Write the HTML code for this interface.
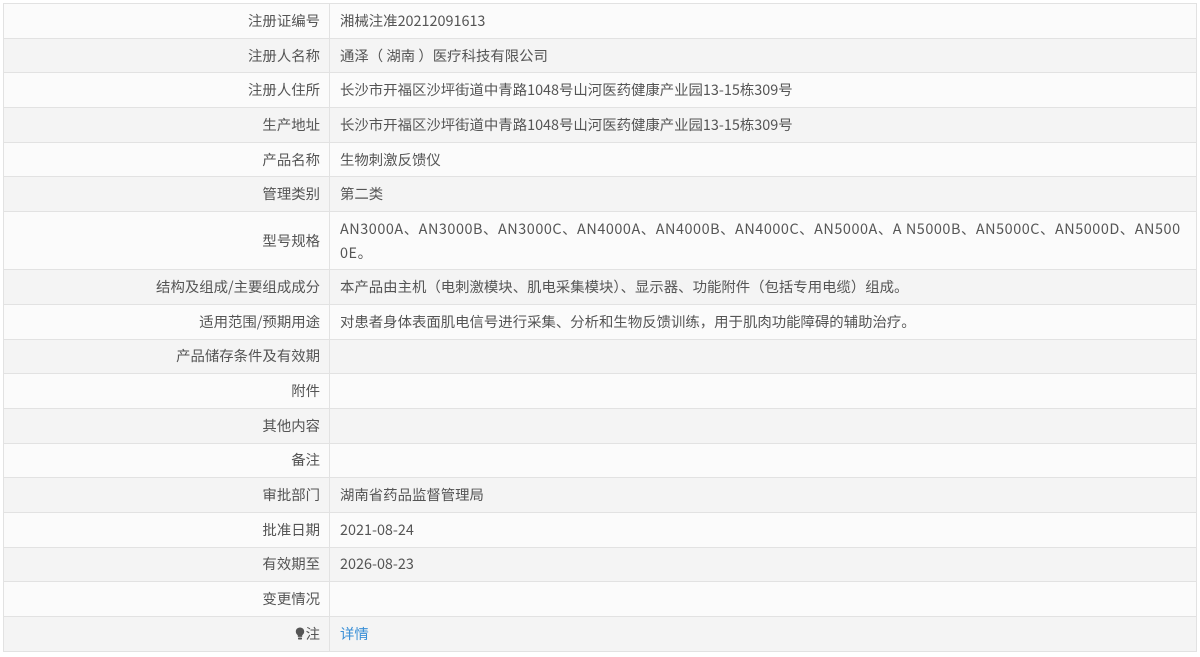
<!DOCTYPE html>
<html><head><meta charset="utf-8">
<style>
html,body{margin:0;padding:0;background:#fff;width:1200px;height:657px;overflow:hidden}
body{font-family:"Noto Sans CJK SC","Liberation Sans",sans-serif;font-size:14.4px;color:#555}
table{position:absolute;left:3px;top:3px;width:1194px;border-collapse:collapse;table-layout:fixed}
td{border:1px solid #e2e2e2;padding:0 10px;height:33.7px;line-height:22px;vertical-align:middle;white-space:nowrap}
td.l{width:306px;text-align:right;padding-right:9px}
tr:nth-child(odd) td{background:#fbfbfb}
tr:nth-child(even) td{background:#f4f4f4}
tr.t td{height:57px}
a{color:#3a8fd6;text-decoration:none}
</style></head><body>
<table>
<tr><td class="l">注册证编号</td><td>湘械注准20212091613</td></tr>
<tr><td class="l">注册人名称</td><td>通泽（ 湖南 ）医疗科技有限公司</td></tr>
<tr><td class="l">注册人住所</td><td>长沙市开福区沙坪街道中青路1048号山河医药健康产业园13-15栋309号</td></tr>
<tr><td class="l">生产地址</td><td>长沙市开福区沙坪街道中青路1048号山河医药健康产业园13-15栋309号</td></tr>
<tr><td class="l">产品名称</td><td>生物刺激反馈仪</td></tr>
<tr><td class="l">管理类别</td><td>第二类</td></tr>
<tr class="t"><td class="l">型号规格</td><td style="line-height:24px;letter-spacing:0.55px">AN3000A、AN3000B、AN3000C、AN4000A、AN4000B、AN4000C、AN5000A、A N5000B、AN5000C、AN5000D、AN500<br>0E。</td></tr>
<tr><td class="l">结构及组成/主要组成成分</td><td>本产品由主机（电刺激模块、肌电采集模块）、显示器、功能附件（包括专用电缆）组成。</td></tr>
<tr><td class="l">适用范围/预期用途</td><td>对患者身体表面肌电信号进行采集、分析和生物反馈训练，用于肌肉功能障碍的辅助治疗。</td></tr>
<tr><td class="l">产品储存条件及有效期</td><td></td></tr>
<tr><td class="l">附件</td><td></td></tr>
<tr><td class="l">其他内容</td><td></td></tr>
<tr><td class="l">备注</td><td></td></tr>
<tr><td class="l">审批部门</td><td>湖南省药品监督管理局</td></tr>
<tr><td class="l">批准日期</td><td>2021-08-24</td></tr>
<tr><td class="l">有效期至</td><td>2026-08-23</td></tr>
<tr><td class="l">变更情况</td><td></td></tr>
<tr><td class="l"><svg width="10" height="13" viewBox="0 0 10 13" style="vertical-align:-1px;margin-right:1px"><path d="M5 0.5C2.5 0.5 0.8 2.3 0.8 4.6c0 1.8 1.2 2.8 2 3.8v1.5h4.4V8.4c0.8-1 2-2 2-3.8C9.2 2.3 7.5 0.5 5 0.5z" fill="#555"/><rect x="3" y="10.5" width="4" height="2" rx="0.8" fill="#555"/></svg>注</td><td><a>详情</a></td></tr>
</table>
</body></html>
